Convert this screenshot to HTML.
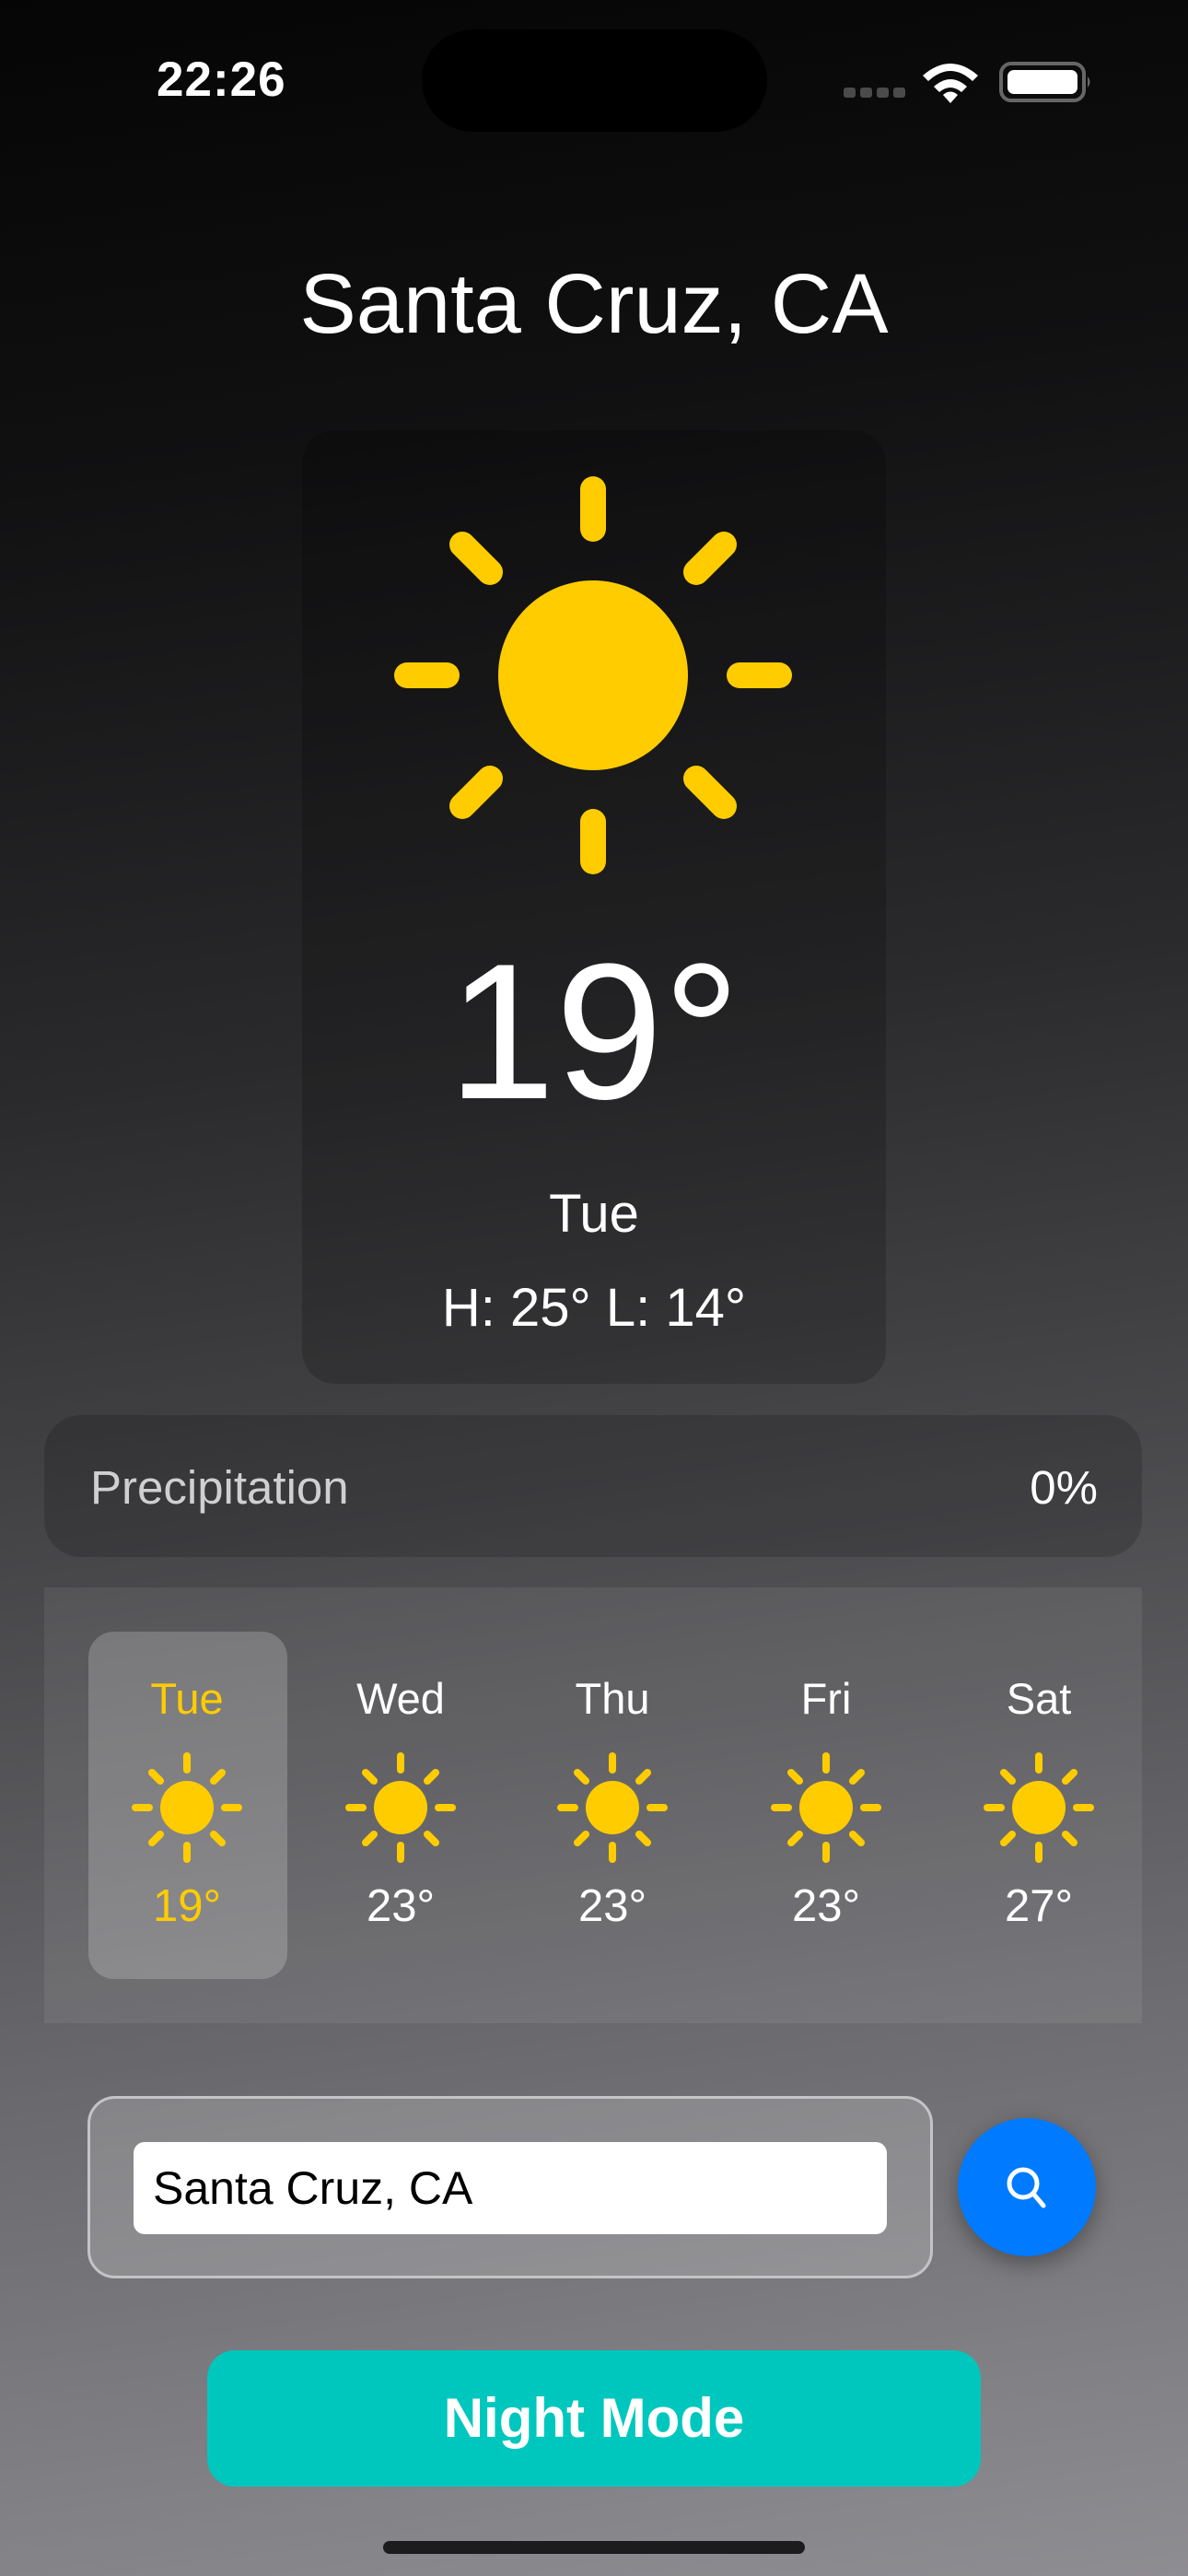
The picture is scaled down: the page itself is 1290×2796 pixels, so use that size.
<!DOCTYPE html>
<html><head><meta charset="utf-8"><style>
*{margin:0;padding:0;box-sizing:border-box}
body{width:1290px;height:2796px;overflow:hidden;font-family:"Liberation Sans",sans-serif;color:#fff;position:relative;
background:linear-gradient(172deg,#050505 0%,#111112 18%,#2a2a2c 40%,#48484b 58%,#6c6c70 78%,#8e8d92 100%)}
.abs{position:absolute}
.c{text-align:center}
</style></head><body>
<div class="abs" style="left:170px;top:56px;width:200px;font-size:53px;font-weight:bold;letter-spacing:1px" >22:26</div>
<div class="abs" style="left:458px;top:32px;width:375px;height:111px;border-radius:56px;background:#000"></div>
<svg class="abs" style="left:910px;top:60px" width="280" height="60" viewBox="0 0 280 60">
<g fill="#4a4a4a"><rect x="6" y="35" width="13" height="11" rx="3"/><rect x="24" y="35" width="13" height="11" rx="3"/><rect x="42" y="35" width="13" height="11" rx="3"/><rect x="60" y="35" width="13" height="11" rx="3"/></g>
<path d="M104 34 Q122 18 140 34 L134 40 Q122 30 110 40 Z" fill="#fff"/>
<path d="M92 22 Q122 -4 152 22 L146 28 Q122 6 98 28 Z" fill="#fff"/>
<path d="M114 43 Q122 36 130 43 L122 52 Z" fill="#fff"/>
<rect x="177" y="9" width="90" height="40" rx="11" fill="none" stroke="#666" stroke-width="4"/>
<rect x="184" y="16" width="76" height="26" rx="7" fill="#fff"/>
<path d="M271 23 Q276 29 271 35 Z" fill="#666"/>
</svg>
<div class="abs c" style="left:0;width:1290px;top:280px;font-size:92px;line-height:100px">Santa Cruz, CA</div>
<div class="abs" style="left:328px;top:467px;width:634px;height:1035px;border-radius:36px;background:rgba(0,0,0,0.18)"></div>
<svg class="abs" style="left:0;top:0" width="1290" height="1500">
<circle cx="644" cy="733" r="103" fill="#ffcc00"/>
<g stroke="#ffcc00" stroke-width="28" stroke-linecap="round">
<line x1="644" y1="574" x2="644" y2="531"/><line x1="644" y1="892" x2="644" y2="935"/>
<line x1="485" y1="733" x2="442" y2="733"/><line x1="803" y1="733" x2="846" y2="733"/>
<line x1="532" y1="621" x2="502" y2="591"/><line x1="756" y1="621" x2="786" y2="591"/>
<line x1="532" y1="845" x2="502" y2="875"/><line x1="756" y1="845" x2="786" y2="875"/>
</g></svg>
<div class="abs c" style="left:328px;width:634px;top:1010px;font-size:210px;line-height:220px">19°</div>
<div class="abs c" style="left:328px;width:634px;top:1285px;font-size:58px;line-height:66px">Tue</div>
<div class="abs c" style="left:328px;width:634px;top:1388px;font-size:58px;line-height:64px">H: 25° L: 14°</div>
<div class="abs" style="left:48px;top:1536px;width:1192px;height:154px;border-radius:40px;background:rgba(0,0,0,0.16)"></div>
<div class="abs" style="left:98px;top:1585px;font-size:51px;color:#cfcfd2">Precipitation</div>
<div class="abs" style="right:98px;top:1585px;font-size:51px">0%</div>
<div class="abs" style="left:48px;top:1723px;width:1192px;height:473px;background:rgba(255,255,255,0.07)"></div>
<div class="abs" style="left:96px;top:1771px;width:216px;height:377px;border-radius:28px;background:rgba(255,255,255,0.2)"></div>
<svg class="abs" style="left:0;top:1700px" width="1290" height="500">
<defs><g id="s"><circle r="29" fill="#ffcc00"/><g stroke="#ffcc00" stroke-width="8" stroke-linecap="round">
<line y1="-41" y2="-56"/><line y1="41" y2="56"/><line x1="-41" x2="-56"/><line x1="41" x2="56"/>
<line x1="-29" y1="-29" x2="-38" y2="-38"/><line x1="29" y1="-29" x2="38" y2="-38"/><line x1="-29" y1="29" x2="-38" y2="38"/><line x1="29" y1="29" x2="38" y2="38"/></g></g></defs>
<use href="#s" x="203" y="262"/><use href="#s" x="435" y="262"/><use href="#s" x="665" y="262"/><use href="#s" x="897" y="262"/><use href="#s" x="1128" y="262"/>
</svg>
<div class="abs" style="left:0;top:1818px;width:1290px;font-size:47px;line-height:52px">
<span class="abs c" style="left:133px;width:140px;color:#ffcc00">Tue</span>
<span class="abs c" style="left:365px;width:140px">Wed</span>
<span class="abs c" style="left:595px;width:140px">Thu</span>
<span class="abs c" style="left:827px;width:140px">Fri</span>
<span class="abs c" style="left:1058px;width:140px">Sat</span>
</div>
<div class="abs" style="left:0;top:2043px;width:1290px;font-size:49px;line-height:52px">
<span class="abs c" style="left:133px;width:140px;color:#ffcc00">19°</span>
<span class="abs c" style="left:365px;width:140px">23°</span>
<span class="abs c" style="left:595px;width:140px">23°</span>
<span class="abs c" style="left:827px;width:140px">23°</span>
<span class="abs c" style="left:1058px;width:140px">27°</span>
</div>
<div class="abs" style="left:95px;top:2275px;width:918px;height:198px;border-radius:30px;border:3px solid #c4c4c6;background:rgba(255,255,255,0.18)"></div>
<div class="abs" style="left:145px;top:2325px;width:818px;height:100px;border-radius:12px;background:#fff;color:#000;font-size:50px;line-height:100px;padding-left:21px">Santa Cruz, CA</div>
<div class="abs" style="left:1040px;top:2299px;width:150px;height:150px;border-radius:50%;background:#007aff;box-shadow:0 8px 24px rgba(0,0,0,0.35)"></div>
<svg class="abs" style="left:1085px;top:2344px" width="60" height="60" viewBox="0 0 60 60">
<circle cx="26" cy="26" r="15" stroke="#fff" stroke-width="5" fill="none"/><line x1="37" y1="37" x2="48" y2="50" stroke="#fff" stroke-width="5" stroke-linecap="round"/></svg>
<div class="abs c" style="left:225px;top:2551px;width:840px;height:148px;border-radius:30px;background:#00c7be;font-size:60px;font-weight:bold;line-height:148px">Night Mode</div>
<div class="abs" style="left:416px;top:2758px;width:458px;height:14px;border-radius:7px;background:#1c1c1e"></div>
</body></html>
